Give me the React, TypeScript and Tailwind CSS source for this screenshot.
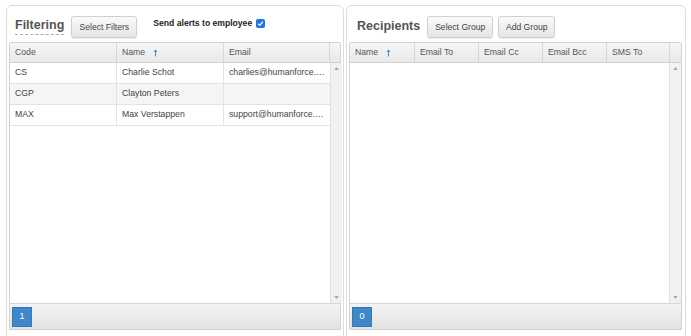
import React from 'react';

const font = { fontFamily: '"Liberation Sans", Arial, sans-serif' };

function Btn({ children, w }: { children: React.ReactNode; w: string }) {
  return (
    <button
      className={`${w} h-[22px] rounded-[3px] border border-[#d0d0d0] bg-gradient-to-b from-[#fafafa] to-[#e6e6e6] text-[8.6px] text-[#444] shadow-[0_1px_1px_rgba(0,0,0,0.08)]`}
    >
      {children}
    </button>
  );
}

function SortArrow() {
  return (
    <svg className="ml-[8px]" width="5" height="8" viewBox="0 0 5 8">
      <path d="M2.5 0.5 L0.5 3 L4.5 3 Z" fill="#3f88cb" />
      <path d="M2.5 2.5 L2.5 7.5" stroke="#3f88cb" strokeWidth="1" />
    </svg>
  );
}

function ScrollTrack() {
  return (
    <div className="w-[12px] shrink-0 bg-[#f1f1f1] border-l border-[#e2e2e2] flex flex-col items-center justify-between py-[4px]">
      <svg width="5" height="3" viewBox="0 0 6 4">
        <path d="M0 4 L3 0 L6 4 Z" fill="#a8a8a8" />
      </svg>
      <svg width="5" height="3" viewBox="0 0 6 4">
        <path d="M0 0 L3 4 L6 0 Z" fill="#a8a8a8" />
      </svg>
    </div>
  );
}

function Footer({ page }: { page: string }) {
  return (
    <div className="h-[26px] border-t border-[#d6d6d6] bg-gradient-to-b from-[#f3f3f3] to-[#e3e3e3] flex items-center px-[2px]">
      <div className="w-[20px] h-[20px] bg-[#3d87ca] border border-[#3577b3] text-white text-[9px] flex items-center justify-center">
        {page}
      </div>
    </div>
  );
}

const rows = [
  { code: 'CS', name: 'Charlie Schot', email: 'charlies@humanforce.com' },
  { code: 'CGP', name: 'Clayton Peters', email: '' },
  { code: 'MAX', name: 'Max Verstappen', email: 'support@humanforce.com' },
];

const head = 'border-r border-[#d6d6d6] px-[5px] flex items-center';

export default function App() {
  return (
    <div style={font} className="w-[691px] h-[336px] overflow-hidden bg-white flex gap-[2px] pl-[6px] pt-[5px]">
      {/* Filtering card */}
      <div className="w-[338px] h-[345px] shrink-0 border border-[#dcdcdc] rounded-[6px] px-[2px]">
        <div className="h-[36px] flex items-center pl-[6px] pt-[3px]">
          <span className="text-[12.5px] font-bold text-[#555] border-b border-dashed border-[#aaa] leading-[16px] pb-[1px] mt-[1px]">
            Filtering
          </span>
          <span className="ml-[7px]">
            <Btn w="w-[66px]">Select Filters</Btn>
          </span>
          <span className="ml-[16px] text-[8.6px] font-bold text-[#222] -mt-[4px] flex items-center">
            Send alerts to employee
            <span className="ml-[4px] w-[9px] h-[9px] rounded-[2px] bg-[#1a73e8] flex items-center justify-center">
              <svg width="7" height="7" viewBox="0 0 8 8">
                <path d="M1.2 4.2 L3.2 6 L6.8 1.8" stroke="white" strokeWidth="1.5" fill="none" />
              </svg>
            </span>
          </span>
        </div>
        <div className="w-[332px] border border-[#d2d2d2] rounded-t-[2px] flex flex-col">
          <div className="h-[20px] flex bg-gradient-to-b from-[#f6f6f6] to-[#e9e9e9] border-b border-[#d2d2d2] text-[8.7px] text-[#555]">
            <div className={`w-[107px] ${head}`}>Code</div>
            <div className={`w-[107px] ${head}`}>
              Name<SortArrow />
            </div>
            <div className={`w-[106px] ${head}`}>Email</div>
            <div className="flex-1" />
          </div>
          <div className="h-[240px] flex">
            <div className="flex-1">
              {rows.map((r, i) => (
                <div
                  key={r.code}
                  className={`h-[21px] flex border-b border-[#e3e3e3] text-[8.7px] text-[#444] ${i === 1 ? 'bg-[#f5f5f5]' : 'bg-white'}`}
                >
                  <div className="w-[107px] border-r border-[#e3e3e3] px-[5px] flex items-center">{r.code}</div>
                  <div className="w-[107px] border-r border-[#e3e3e3] px-[5px] flex items-center">{r.name}</div>
                  <div className="w-[106px] px-[5px] flex items-center min-w-0">
                    <span className="truncate">{r.email}</span>
                  </div>
                </div>
              ))}
            </div>
            <ScrollTrack />
          </div>
          <Footer page="1" />
        </div>
      </div>

      {/* Recipients card */}
      <div className="w-[340px] h-[345px] shrink-0 border border-[#dcdcdc] rounded-[6px] px-[2px]">
        <div className="h-[36px] flex items-center pl-[8px] pt-[3px]">
          <span className="text-[12.5px] font-bold text-[#555] leading-[16px]">Recipients</span>
          <span className="ml-[7px]">
            <Btn w="w-[66px]">Select Group</Btn>
          </span>
          <span className="ml-[5px]">
            <Btn w="w-[57px]">Add Group</Btn>
          </span>
        </div>
        <div className="w-[333px] border border-[#d2d2d2] rounded-t-[2px] flex flex-col">
          <div className="h-[20px] flex bg-gradient-to-b from-[#f6f6f6] to-[#e9e9e9] border-b border-[#d2d2d2] text-[8.7px] text-[#555]">
            <div className={`w-[65px] ${head}`}>
              Name<SortArrow />
            </div>
            <div className={`w-[64px] ${head}`}>Email To</div>
            <div className={`w-[64px] ${head}`}>Email Cc</div>
            <div className={`w-[64px] ${head}`}>Email Bcc</div>
            <div className={`w-[63px] ${head}`}>SMS To</div>
            <div className="flex-1" />
          </div>
          <div className="h-[240px] flex">
            <div className="flex-1" />
            <ScrollTrack />
          </div>
          <Footer page="0" />
        </div>
      </div>
    </div>
  );
}
